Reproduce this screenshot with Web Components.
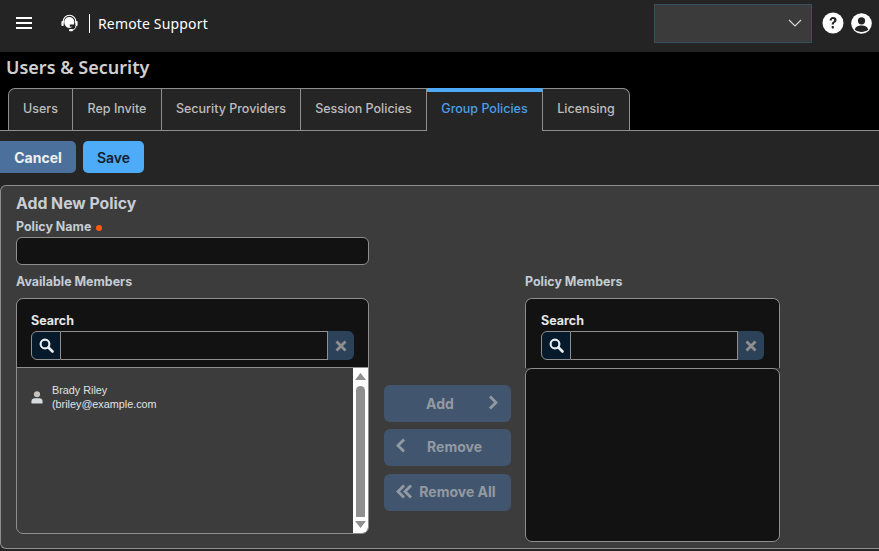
<!DOCTYPE html>
<html><head><meta charset="utf-8"><style>
html,body{margin:0;height:100%;background:#000;overflow:hidden}
body{font-family:Inter,"Liberation Sans",sans-serif}
</style></head><body>
<app-shell></app-shell>
<script>
function def(name, css, html){
  customElements.define(name, class extends HTMLElement{
    constructor(){super();this.attachShadow({mode:'open'}).innerHTML='<style>'+css+'</style>'+html;}
  });
}
const ICON={
 search:'<svg width="15" height="15" viewBox="0 0 15 15"><circle cx="6" cy="6" r="4.400" fill="none" stroke="currentColor" stroke-width="2.100"/><path d="M9.500 9.500l4 4" stroke="currentColor" stroke-width="2.600" stroke-linecap="round"/></svg>',
 x:'<svg width="12" height="12" viewBox="0 0 12 12"><path d="M1.500 1.500l9 9M10.500 1.500l-9 9" stroke="currentColor" stroke-width="2.800"/></svg>'
};
def('app-header',`
:host{display:flex;align-items:center;height:52px;background:#242424;color:#fff;flex:none;padding-bottom:6px;box-sizing:border-box}
.menu{margin-left:16px;width:16px;height:13px;display:flex;flex-direction:column;justify-content:space-between}
.menu i{display:block;height:2.400px;background:#fff}
.logo{margin-left:29px;display:flex}
.sep{width:1px;height:19px;background:#fff;margin:0 8px 0 11px}
.name{font:14px "Noto Sans",sans-serif;color:#fff;letter-spacing:.16px}
.sp{flex:1}
.sel{width:147px;height:37px;background:#3b3b3b;border:1px solid #37505f;display:flex;align-items:center;justify-content:flex-end;padding-right:9px}
.ic{display:flex}
`,`
<div class="menu"><i></i><i></i><i></i></div>
<div class="logo"><svg width="17" height="18" viewBox="0 0 17 18">
<path d="M2.200 9V7.500a6.300 6.300 0 0 1 12.600 0V9" fill="none" stroke="#fff" stroke-width="1.100"/>
<rect x=".4" y="7" width="2.300" height="5" rx="1" fill="#fff"/><rect x="14.300" y="7" width="2.300" height="5" rx="1" fill="#fff"/>
<path d="M8.300 2.900c3 0 5 2.100 5 5.100 0 .9-.2 1.800-.5 2.500H8.800v2.300h2.600c-.9.700-2 1.100-3.100 1.100-3 0-5-2.800-5-5.900 0-3 2-5.100 5-5.100z" fill="#fff"/>
<path d="M14.900 12c0 2.200-1.500 3.600-3.500 4" fill="none" stroke="#fff" stroke-width="1"/>
<rect x="8" y="15" width="4" height="2.200" rx="1" fill="#fff"/>
</svg></div>
<div class="sep"></div><div class="name">Remote Support</div><div class="sp"></div>
<div class="sel"><svg width="14" height="8" viewBox="0 0 14 8"><path d="M1 1l6 6 6-6" fill="none" stroke="#ddd" stroke-width="1.100"/></svg></div>
<div class="ic" style="margin-left:10px"><svg width="22" height="22" viewBox="0 0 22 22"><circle cx="11" cy="11" r="10.500" fill="#fff"/><path d="M7.600 8.400c0-2 1.500-3.300 3.500-3.300 2 0 3.500 1.200 3.500 3 0 2.500-2.800 2.400-2.800 4.400H9.700c0-3 2.500-3 2.500-4.300 0-.7-.5-1.200-1.200-1.200-.8 0-1.200.6-1.200 1.400z" fill="#242424"/><rect x="9.700" y="14" width="2.200" height="2.400" rx=".4" fill="#242424"/></svg></div>
<div class="ic" style="margin-left:7px;margin-right:7px"><svg width="21" height="21" viewBox="0 0 21 21"><circle cx="10.500" cy="10.500" r="10.300" fill="#fff"/><circle cx="10.500" cy="7.800" r="3.600" fill="#242424"/><path d="M3.800 16.800c.6-3.400 3.200-4.400 6.700-4.400s6.100 1 6.700 4.400c-1.700 1.300-4.100 2.100-6.700 2.100s-5-.8-6.700-2.100z" fill="#242424"/></svg></div>
`);
def('page-title',`:host{display:block;flex:none;height:36px;background:#000}
h1{margin:0;padding:3px 0 0 6px;font:600 18px/24px "Noto Sans",sans-serif;color:#d0d0d0}`,`<h1><slot></slot></h1>`);
def('tab-item',`
:host{display:flex;align-items:center;justify-content:center;box-sizing:border-box;height:42px;border:1px solid #8e8e8e;border-left-width:0;border-bottom:0;background:#252525;color:#bdbdbd;font:500 12.500px Inter,sans-serif;margin-bottom:1px;padding-bottom:3px}
:host([first]){border-left-width:1px;border-top-left-radius:7px}
:host([last]){border-top-right-radius:7px}
:host([active]){color:#4a9fe8;border-top:4px solid #4dabf7;height:43px;margin-bottom:0;padding-bottom:6px}
`,`<slot></slot>`);
def('tab-bar',`:host{display:flex;flex:none;height:43px;padding-left:8px;background:linear-gradient(#000 0 42px,#8e8e8e 42px)}
`,`<slot></slot>`);
def('ui-button',`
:host{display:inline-flex;align-items:center;justify-content:center;box-sizing:border-box;height:32px;border-radius:5px;font:700 14px Inter,sans-serif}
:host([variant=cancel]){background:#4a709b;color:#f0f0f0;width:76px;border-radius:0 5px 5px 0}
:host([variant=save]){background:#4dabf7;color:#14202c;width:61px;font-weight:600}
`,`<slot></slot>`);
def('action-bar',`:host{display:flex;flex:none;gap:7px;height:54px;box-sizing:border-box;padding-top:10px;background:#252525}`,`<slot></slot>`);
def('search-box',`
:host{display:block;background:#121212;height:68px;box-sizing:border-box;padding:14px 14px 0 14px;border-radius:6px 6px 0 0}
label{display:block;font:700 12.500px/16px Inter,sans-serif;color:#e6e6e6;margin-bottom:2px}
.row{display:flex;height:29px}
.s{width:30px;box-sizing:border-box;border:1px solid #8e8e8e;border-radius:6px 0 0 6px;background:#071a2c;color:#e8eef4;display:flex;align-items:center;justify-content:center}
.i{flex:1;box-sizing:border-box;border:1px solid #8e8e8e;border-left:0;background:#121212}
.x{width:26px;background:#2c4258;color:#8f8f8f;border-radius:0 6px 6px 0;display:flex;align-items:center;justify-content:center}
`,`<label>Search</label><div class="row"><div class="s">${ICON.search}</div><div class="i"></div><div class="x">${ICON.x}</div></div>`);
def('member-item',`
:host{display:flex;align-items:center;padding:15px 0 0 14px;color:#e2e2e2;font:10.800px/14px "Liberation Sans",Arial,sans-serif}
svg{margin-right:9px;flex:none;margin-top:1px}
`,`<svg width="12" height="13" viewBox="0 0 13 14"><circle cx="6.500" cy="3.500" r="3.300" fill="#c8c4bc"/><path d="M.5 13.500v-2.500c0-2.300 1.800-3.200 3.200-3.200h5.600c1.400 0 3.200.9 3.200 3.200v2.500z" fill="#d4dce2"/></svg><div><slot></slot></div>`);
def('fake-scrollbar',`
:host{display:flex;flex-direction:column;align-items:center;width:15px;background:#fff;flex:none;box-sizing:border-box;padding:5px 0 5px}
.t{flex:1;width:9px;background:#8f8f8f;border-radius:5px 5px 0 0;margin:6px 0 4px}
svg{display:block}
`,`<svg width="11" height="7" viewBox="0 0 11 7"><path d="M5.500 0L11 7H0z" fill="#8f8f8f"/></svg><div class="t"></div><svg width="11" height="7" viewBox="0 0 11 7"><path d="M5.500 7L11 0H0z" fill="#8f8f8f"/></svg>`);
def('member-list',`
:host{display:flex;flex-direction:column;box-sizing:border-box;border:1px solid #8e8e8e;border-radius:7px;background:#3c3c3c;height:236px;overflow:hidden}
.l{display:flex;flex:1;border-top:1px solid #8e8e8e;min-height:0}
.c{flex:1}
`,`<search-box></search-box><div class="l"><div class="c"><slot></slot></div><fake-scrollbar></fake-scrollbar></div>`);
def('policy-list',`
:host{display:flex;flex-direction:column;width:255px}
.h{box-sizing:border-box;border:1px solid #8e8e8e;border-bottom:0;border-radius:7px 7px 0 0;overflow:hidden;height:70px;background:#121212}
.h search-box{padding:14px 15px 0 15px}
.b{box-sizing:border-box;height:174px;border:1px solid #8e8e8e;border-radius:7px;background:#121212}
`,`<div class="h"><search-box></search-box></div><div class="b"></div>`);
def('move-button',`
:host{display:flex;align-items:center;justify-content:center;position:relative;height:37px;background:#41566e;border-radius:6px;color:#929aa2;font:700 14px Inter,sans-serif;box-sizing:border-box;gap:6px}
`,`<slot></slot>`);
def('field-label',`:host{display:block;font:700 12.450px/16px Inter,sans-serif;color:#c4ccd4}`,`<slot></slot>`);
def('policy-panel',`
:host{display:block;flex:1;margin:0 0 2px 0;box-sizing:border-box;border:1px solid #8e8e8e;border-right:0;border-radius:6px 0 0 6px;background:#3c3c3c;padding:8px 0 0 15px;min-height:0}
h2{margin:0;font:700 15.800px/20px Inter,sans-serif;color:#c8ced4}
.pn{margin-top:5px;display:flex;align-items:center;font:700 12.450px/16px Inter,sans-serif;color:#c4ccd4}
.pn i{display:inline-block;width:6px;height:6px;border-radius:50%;background:#fb5a14;margin-left:5px;margin-top:1px}
.inp{width:353px;height:28px;box-sizing:border-box;border:1px solid #8e8e8e;border-radius:6px;background:#121212;margin-top:2px}
.cols{display:flex;margin-top:9px}
.c1{width:353px}
.cols field-label{margin-bottom:8px}
.mid{width:127px;margin:111px 14px 0 15px;display:flex;flex-direction:column;gap:7px}
.mid move-button:last-child{margin-top:1px}
.mid svg{display:block;flex:none}
.mid .up{padding-bottom:2px}
.a{position:absolute;top:10px}
`,`
<h2>Add New Policy</h2>
<div class="pn">Policy Name<i></i></div>
<div class="inp"></div>
<div class="cols">
 <div class="c1"><field-label>Available Members</field-label><member-list><member-item>Brady Riley<br>(briley@example.com</member-item></member-list></div>
 <div class="mid">
  <move-button><span style="margin-right:15px">Add</span><svg class="a" style="right:13px" width="10" height="15" viewBox="0 0 10 15"><path d="M2 1.500l6 6-6 6" fill="none" stroke="currentColor" stroke-width="2.700"/></svg></move-button>
  <move-button class="up"><svg class="a" style="left:12px;top:9px" width="10" height="15" viewBox="0 0 10 15"><path d="M8 1.500l-6 6 6 6" fill="none" stroke="currentColor" stroke-width="2.700"/></svg><span style="margin-left:14px">Remove</span></move-button>
  <move-button class="up"><svg style="margin-left:-3px" width="17" height="15" viewBox="0 0 17 15"><path d="M8 1.500L2 7.500l6 6M15 1.500l-6 6 6 6" fill="none" stroke="currentColor" stroke-width="2.800"/></svg><span>Remove All</span></move-button>
 </div>
 <div><field-label>Policy Members</field-label><policy-list></policy-list></div>
</div>`);
def('app-shell',`:host{display:flex;flex-direction:column;height:551px;width:879px;background:#252525;color:#ddd;overflow:hidden}`,`
<app-header></app-header>
<page-title>Users &amp; Security</page-title>
<tab-bar>
<tab-item first style="width:65px">Users</tab-item>
<tab-item style="width:89px">Rep Invite</tab-item>
<tab-item style="width:139px">Security Providers</tab-item>
<tab-item style="width:126px">Session Policies</tab-item>
<tab-item active style="width:116px">Group Policies</tab-item>
<tab-item last style="width:87px">Licensing</tab-item>
</tab-bar>
<action-bar><ui-button variant="cancel">Cancel</ui-button><ui-button variant="save">Save</ui-button></action-bar>
<policy-panel></policy-panel>`);
</script>
</body></html>
